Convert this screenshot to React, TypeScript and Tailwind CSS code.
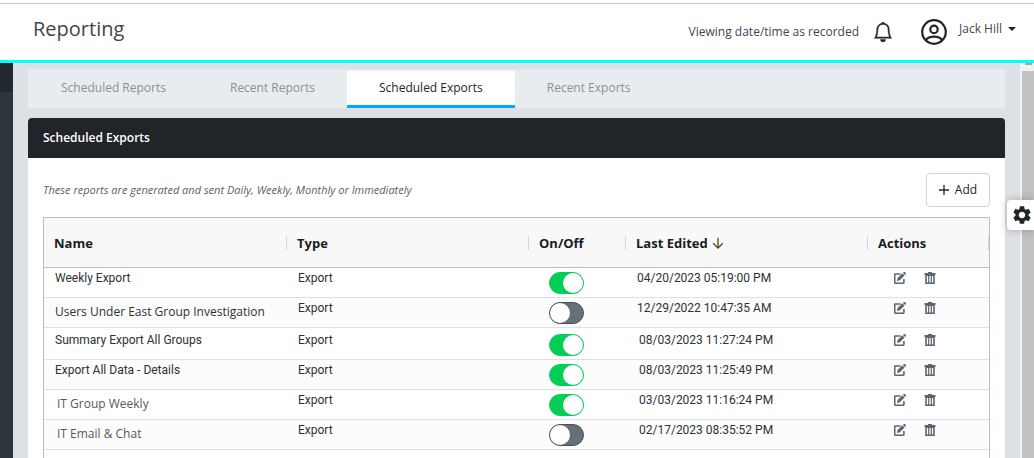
import { useState } from 'react';
import clsx from 'clsx';
import { BsBell } from 'react-icons/bs';
import { MdSettings } from 'react-icons/md';

interface ExportRow {
  name: string;
  edited: string;
  on: boolean;
  wide?: boolean;
  custom?: boolean;
}

const TABS = ['Scheduled Reports', 'Recent Reports', 'Scheduled Exports', 'Recent Exports'];

const ROWS: ExportRow[] = [
  { name: 'Weekly Export', edited: '04/20/2023 05:19:00 PM', on: true },
  { name: 'Users Under East Group Investigation', edited: '12/29/2022 10:47:35 AM', on: false, wide: true },
  { name: 'Summary Export All Groups', edited: '08/03/2023 11:27:24 PM', on: true },
  { name: 'Export All Data - Details', edited: '08/03/2023 11:25:49 PM', on: true },
  { name: 'IT Group Weekly', edited: '03/03/2023 11:16:24 PM', on: true, custom: true },
  { name: 'IT Email & Chat', edited: '02/17/2023 08:35:52 PM', on: false, custom: true },
];

function AvatarIcon() {
  return (
    <svg viewBox="0 0 26 26" className="size-[26px]" fill="none" stroke="currentColor" strokeWidth="2.2">
      <circle cx="13" cy="13" r="11.8" />
      <circle cx="13" cy="10.4" r="3.7" />
      <path d="M4.6 21.2C6.4 18.8 9.4 17.6 13 17.6s6.6 1.2 8.4 3.6" />
    </svg>
  );
}

function EditIcon() {
  return (
    <svg viewBox="0 0 12 12" className="size-3" fill="none" stroke="currentColor">
      <path d="M6.5 2H1.3a.6.6 0 0 0-.6.6v8a.6.6 0 0 0 .6.6h8a.6.6 0 0 0 .6-.6V7" strokeWidth="1.6" />
      <path d="M3 9l.6-3 4.7-4.7 2.3 2.3-4.7 4.7z" fill="currentColor" stroke="none" />
      <path d="M9 .8l.8-.8a.7.7 0 0 1 1 0l1.1 1.1a.7.7 0 0 1 0 1l-.8.8z" fill="currentColor" stroke="none" />
    </svg>
  );
}

function TrashIcon() {
  return (
    <svg viewBox="0 0 12 12" className="size-3" fill="none" stroke="currentColor">
      <path d="M.5 2h11" strokeWidth="2" />
      <path d="M4 .5h4" />
      <path d="M2 4v7.3h8V4" strokeWidth="1.6" />
      <path d="M1.2 3.5h9.6M4.7 3.5V11M7.3 3.5V11" strokeWidth="1.2" />
    </svg>
  );
}

function Header() {
  return (
    <header className="flex h-[63px] shrink-0 items-start border-b-3 border-[#00ffff] bg-white">
      <div className="mt-[3px] flex flex-1 items-start border-t border-[#c8c8c8] pl-[33px] pr-[18px]">
        <h1 className="mt-[9px] flex-1 text-[20px] leading-8 text-[#3f464d]">Reporting</h1>
        <p className="mt-4.5 text-[12px] leading-5 text-[#3f464d]">Viewing date/time as recorded</p>
        <button aria-label="Notifications" className="ml-3.5 mt-4.5 text-[#212529]">
          <BsBell className="size-5 stroke-[0.4]" />
        </button>
        <button className="ml-7 flex items-start text-[#212529]">
          <span className="mt-[15px]">
            <AvatarIcon />
          </span>
          <span className="ml-3 mt-[15px] flex items-center gap-1.5 text-[12px] leading-5 text-[#3f464d]">
            Jack Hill
            <span className="border-x-4 border-t-4 border-x-transparent border-t-[#212529]" />
          </span>
        </button>
      </div>
    </header>
  );
}

function Toggle({ label, initial }: { label: string; initial: boolean }) {
  const [on, setOn] = useState(initial);

  return (
    <input
      type="checkbox"
      role="switch"
      aria-label={label}
      checked={on}
      onChange={() => setOn(!on)}
      className="block h-[22px] w-[35px] cursor-pointer appearance-none rounded-full border border-[#495057] bg-[#66707a] before:block before:size-5 before:rounded-full before:bg-white checked:border-[#05ce56] checked:bg-[#05ce56] checked:before:ml-[13px]"
    />
  );
}

function HeadCell({ children }: { children: React.ReactNode }) {
  return (
    <th scope="col" className="h-[49px] p-0 pt-px text-left font-bold">
      <div className="flex h-3.5 items-center border-r border-[#d3d5de] pl-2.5">{children}</div>
    </th>
  );
}

function ExportsTable() {
  return (
    <div className="flex-1 border border-b-0 border-[#babfc7]">
      <table className="w-full table-fixed border-collapse">
        <colgroup>
          <col className="w-[243px]" />
          <col className="w-[242px]" />
          <col className="w-[97px]" />
          <col className="w-[242px]" />
          <col />
        </colgroup>
        <thead className="border-b border-[#babfc7] bg-[#f8f8f8] text-[13px] leading-5 text-[#181d1f]">
          <tr>
            <HeadCell>Name</HeadCell>
            <HeadCell>Type</HeadCell>
            <HeadCell>On/Off</HeadCell>
            <HeadCell>
              Last Edited
              <svg viewBox="0 0 12 12" className="ml-1 size-3" fill="none" stroke="#5c4326" strokeWidth="1.3">
                <path d="M6 .8v10M1.2 6.2L6 11l4.800-4.800" />
              </svg>
            </HeadCell>
            <HeadCell>Actions</HeadCell>
          </tr>
        </thead>
        <tbody className="font-['Roboto',sans-serif] text-[12px] leading-5 text-[#2c3134]">
          {ROWS.map((row, i) => (
            <tr
              key={row.name}
              className={clsx(
                'border-b border-[#dde0ea] align-top even:bg-[#fcfcfc]',
                i === 2 ? 'h-8 [&>td]:pt-0.5' : 'h-[30px]',
              )}
            >
              <td
                className={clsx(
                  'p-0',
                  (row.custom || row.wide) && "align-middle font-['Open_Sans',sans-serif]",
                  row.custom ? 'pl-[13px] text-[#55595c]' : 'pl-[11px]',
                )}
              >
                {row.name}
              </td>
              <td className="p-0 pl-[11px]">Export</td>
              <td className="p-0">
                <div className="pl-5 pt-1">
                  <Toggle label={`Turn ${row.name} on or off`} initial={row.on} />
                </div>
              </td>
              <td className={clsx('p-0', i > 1 ? 'pl-[13px]' : 'pl-[11px]')}>{row.edited}</td>
              <td className="p-0">
                <div className="flex h-5 items-center gap-[18px] pl-[26px] text-[#5b6670]">
                  <button aria-label={`Edit ${row.name}`}>
                    <EditIcon />
                  </button>
                  <button aria-label={`Delete ${row.name}`}>
                    <TrashIcon />
                  </button>
                </div>
              </td>
            </tr>
          ))}
        </tbody>
      </table>
    </div>
  );
}

export default function App() {
  const [tab, setTab] = useState('Scheduled Exports');

  return (
    <div className="relative flex h-screen flex-col overflow-hidden bg-white font-['Open_Sans',sans-serif]">
      <Header />

      <div className="flex min-h-0 flex-1 bg-[#dde1e6]">
        {/* Collapsed side navigation */}
        <aside className="w-[13px] shrink-0 bg-[#2d353c]">
          <div className="h-[29px] bg-[#22292e]" />
        </aside>

        <main className="flex flex-1 flex-col px-[15px] pt-1.5">
          <nav role="tablist" className="flex h-[39px] shrink-0 items-end bg-[#e8ecef] pl-px">
            {TABS.map(name => (
              <button
                key={name}
                role="tab"
                aria-selected={tab === name}
                onClick={() => setTab(name)}
                className={clsx(
                  'h-[37px] border-b-3 px-8 text-[12px] font-medium',
                  tab === name
                    ? 'border-[#00a8ff] bg-white text-[#212529]'
                    : 'border-transparent text-[#8c9196]',
                )}
              >
                {name}
              </button>
            ))}
          </nav>

          <section className="mt-2.5 flex flex-1 flex-col rounded-t bg-white">
            <h2 className="flex h-10 items-center rounded-t bg-[#212529] px-[15px] text-[12px] font-semibold text-white">
              Scheduled Exports
            </h2>
            <div className="flex flex-1 flex-col px-[15px] pt-[15px]">
              <div className="mb-2.5 flex items-center justify-between">
                <p className="text-[11px] italic text-[#5a6168]">
                  These reports are generated and sent Daily, Weekly, Monthly or Immediately
                </p>
                <button className="flex h-[34px] w-16 items-center justify-center gap-1.5 rounded border border-[#ced4da] text-[12px] text-[#212529]">
                  <svg viewBox="0 0 10 10" className="size-2.5" stroke="currentColor" strokeWidth="1.3">
                    <path d="M5 0v10M0 5h10" />
                  </svg>
                  Add
                </button>
              </div>
              <ExportsTable />
            </div>
          </section>
        </main>

        {/* Scrollbar strip */}
        <div className="flex w-3.5 shrink-0 flex-col bg-[#f1f1f1] pl-0.5">
          <div className="flex h-2 justify-center">
            <span className="h-0.5 w-[7px] bg-[#a3a3a3]" />
          </div>
          <div className="flex-1 bg-[#c1c1c1]" />
        </div>
      </div>

      <button
        aria-label="Settings"
        className="absolute right-0 top-[200px] flex h-[30px] w-[27px] items-center justify-end rounded-l bg-white pr-px text-[#212529] shadow-[0_0_8px_rgba(0,0,0,0.25)]"
      >
        <MdSettings className="size-[22px]" />
      </button>
    </div>
  );
}
